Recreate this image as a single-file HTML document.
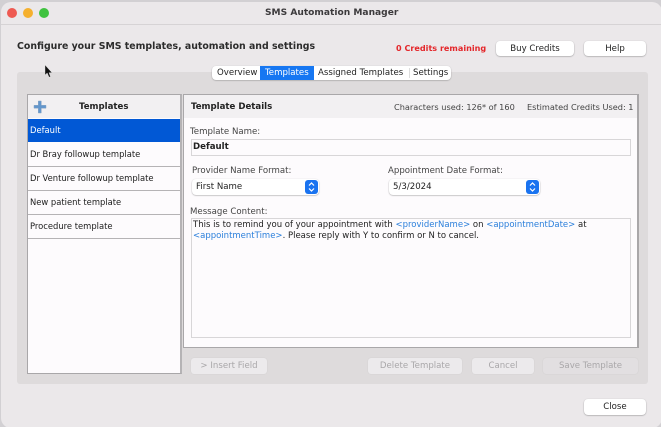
<!DOCTYPE html>
<html><head><meta charset="utf-8"><style>
html,body{margin:0;padding:0;width:661px;height:427px;overflow:hidden;background:#d2d0d3}
*{box-sizing:border-box}
body{font-family:"DejaVu Sans","Liberation Sans",sans-serif;font-size:8.6px;color:#222;position:relative}
.a{position:absolute;white-space:nowrap}
.t{position:absolute;white-space:nowrap;line-height:12px;filter:blur(.3px)}
.btn{position:absolute;background:#fff;border-radius:4px;box-shadow:0 .5px 1.5px rgba(0,0,0,.35);text-align:center;color:#222;height:15px;line-height:16px;font-size:8.6px}
.dis{background:#eceaec;color:#a9a7a9;box-shadow:0 0 1px rgba(0,0,0,.12);height:16px;line-height:17px;border-radius:3px}
.li{position:absolute;left:28px;width:152px;height:24px;border-bottom:1px solid #b5b3b5;line-height:22px;padding-left:2px;font-size:8.4px;color:#1c1c1c}
.sel{position:absolute;height:16px;background:#fff;border-radius:4px;box-shadow:0 .5px 1.5px rgba(0,0,0,.35);line-height:17px;padding-left:4px;font-size:8.6px}
.st{position:absolute;right:1px;top:1px;width:13px;height:14px;background:#1a73f0;border-radius:3px;line-height:0}
.b{color:#2b7fdb}
</style></head><body>
<div class="a" style="left:1px;top:2px;width:661px;height:426px;background:#ebe8ea;border-radius:10px"></div>
<div class="a" style="left:1px;top:24px;width:660px;height:1px;background:#d6d3d5"></div>
<div class="a" style="left:7px;top:8px;width:10px;height:10px;border-radius:50%;background:#ee5a52"></div>
<div class="a" style="left:23px;top:8px;width:10px;height:10px;border-radius:50%;background:#f5b02e"></div>
<div class="a" style="left:39px;top:8px;width:10px;height:10px;border-radius:50%;background:#3fc23f"></div>
<div class="t" style="left:265px;top:7px;font-weight:bold;font-size:9.1px;color:#3c3a3c">SMS Automation Manager</div>
<div class="t" style="left:17px;top:41px;font-weight:bold;font-size:9.4px;color:#2c2c2c">Configure your SMS templates, automation and settings</div>
<div class="t" style="left:396px;top:42px;font-weight:bold;font-size:8.1px;color:#e4262a">0 Credits remaining</div>
<div class="btn" style="left:496px;top:41px;width:78px">Buy Credits</div>
<div class="btn" style="left:584px;top:41px;width:62px">Help</div>

<div class="a" style="left:17px;top:72px;width:631px;height:312px;background:#dedbdc;border-radius:3px"></div>
<svg class="a" style="left:44px;top:65px" width="10" height="14" viewBox="0 0 10 14"><path d="M1 0V10L3.2 8L5 12H6.6L5 7.7H8Z" fill="#111" stroke="#ddd" stroke-width=".4"/></svg>

<div class="a" style="left:212px;top:66px;width:239px;height:14px;background:#fff;border-radius:4px;box-shadow:0 .5px 1.5px rgba(0,0,0,.3)"></div>
<div class="a" style="left:260px;top:66px;width:54px;height:14px;background:#1677f2"></div>
<div class="a" style="left:409px;top:68px;width:1px;height:10px;background:#ddd"></div>
<div class="t" style="left:217px;top:67px;font-size:8.6px">Overview</div>
<div class="t" style="left:265px;top:67px;font-size:8.6px;color:#fff">Templates</div>
<div class="t" style="left:318px;top:67px;font-size:8.6px">Assigned Templates</div>
<div class="t" style="left:413px;top:67px;font-size:8.6px">Settings</div>

<div class="a" style="left:27px;top:94px;width:155px;height:280px;background:#fdfbfd;border:1px solid #a9a7a9;border-right:2px solid #b5b3b5"></div>
<div class="a" style="left:28px;top:95px;width:152px;height:23px;background:#f2f0f2"></div>
<svg class="a" style="left:33px;top:100px" width="14" height="14" viewBox="0 0 14 14"><path d="M5.300 1H8.300V5.300H13V8.200H8.300V13H5.300V8.200H1V5.300H5.300Z" fill="#6396cc" stroke="#8aa5c4" stroke-width=".5"/></svg>
<div class="t" style="left:79px;top:101px;font-weight:bold;font-size:8.6px">Templates</div>
<div class="li" style="top:119px;background:#0158d5;color:#fff;border:0;height:23px">Default</div>
<div class="li" style="top:143px">Dr Bray followup template</div>
<div class="li" style="top:167px">Dr Venture followup template</div>
<div class="li" style="top:191px">New patient template</div>
<div class="li" style="top:215px">Procedure template</div>

<div class="a" style="left:183px;top:94px;width:456px;height:254px;background:#fdfbfd;border:1px solid #a9a7a9;border-right:2px solid #a9a7a9;border-bottom:1px solid #a9a7a9"></div>
<div class="a" style="left:184px;top:95px;width:453px;height:23px;background:#f2f0f2"></div>
<div class="t" style="left:191px;top:101px;font-weight:bold;font-size:8.600px">Template Details</div>
<div class="t" style="left:394px;top:101px;font-size:8.200px;color:#444">Characters used: 126* of 160</div>
<div class="t" style="left:527px;top:101px;font-size:8.200px;color:#444">Estimated Credits Used: 1</div>

<div class="t" style="left:190px;top:126px;color:#444">Template Name:</div>
<div class="a" style="left:191px;top:139px;width:440px;height:17px;border:1px solid #d8d6d8;background:#fdfbfd"></div>
<div class="t" style="left:193px;top:141px;font-weight:bold;color:#222">Default</div>

<div class="t" style="left:192px;top:165px;color:#444">Provider Name Format:</div>
<div class="sel" style="left:192px;top:179px;width:127px">First Name<div class="st"><svg width="13" height="14" viewBox="0 0 13 14"><path d="M4 5.500L6.500 3L9 5.500M4 8.500L6.500 11L9 8.500" fill="none" stroke="#fff" stroke-width="1.200"/></svg></div></div>
<div class="t" style="left:388px;top:165px;color:#444">Appointment Date Format:</div>
<div class="sel" style="left:389px;top:179px;width:151px">5/3/2024<div class="st"><svg width="13" height="14" viewBox="0 0 13 14"><path d="M4 5.500L6.500 3L9 5.500M4 8.500L6.500 11L9 8.500" fill="none" stroke="#fff" stroke-width="1.200"/></svg></div></div>

<div class="t" style="left:190px;top:206px;color:#444">Message Content:</div>
<div class="a" style="left:191px;top:218px;width:440px;height:120px;border:1px solid #d8d6d8;background:#fdfbfd"></div>
<div class="t" style="left:193px;top:220px;line-height:10.500px;font-size:8.500px;color:#222">This is to remind you of your appointment with <span class="b">&lt;providerName&gt;</span> on <span class="b">&lt;appointmentDate&gt;</span> at<br><span class="b">&lt;appointmentTime&gt;</span>. Please reply with Y to confirm or N to cancel.</div>

<div class="btn dis" style="left:191px;top:358px;width:76px">&gt; Insert Field</div>
<div class="btn dis" style="left:368px;top:358px;width:94px">Delete Template</div>
<div class="btn dis" style="left:472px;top:358px;width:62px">Cancel</div>
<div class="btn dis" style="left:543px;top:358px;width:95px;background:#e2dfe1">Save Template</div>
<div class="btn" style="left:584px;top:399px;width:62px;height:16px;line-height:17px">Close</div>
</body></html>
